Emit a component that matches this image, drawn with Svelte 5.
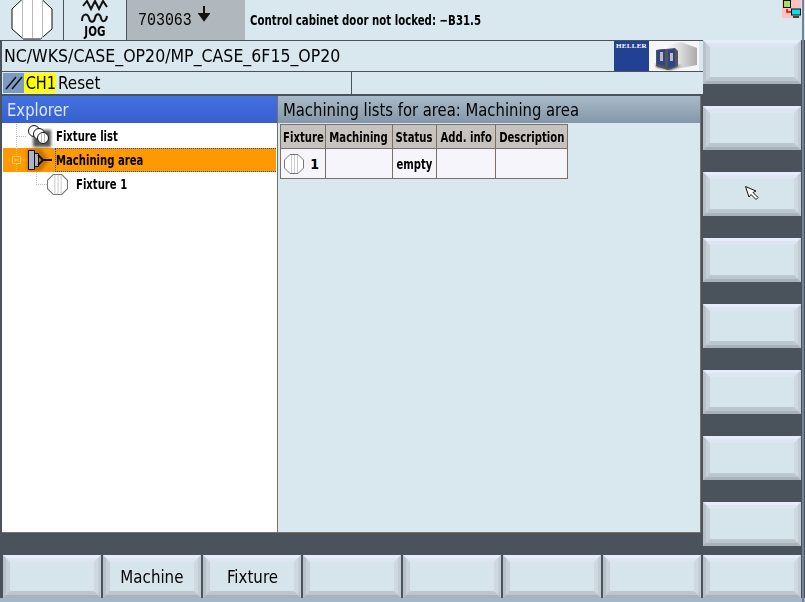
<script>
  /** HMI screen — machining area explorer with softkey bars. */
  const columns = ['Fixture', 'Machining', 'Status', 'Add. info', 'Description']
  const rightKeys = [0, 1, 2, 3, 4, 5, 6, 7]
  const bottomKeys = ['', 'Machine', 'Fixture', '', '', '', '', '']
</script>

{#snippet fixture(w, h)}
  <svg class="fixture" width={w} height={h} viewBox="0 0 20 20">
    <path d="M6 .5h8L19.500 6v8L14 19.500H6L.5 14V6z" fill="#fff" stroke="#777" />
    <path d="M7.500 1v18M10.500 1v18M13.500 1v18" stroke="#ccc" fill="none" />
  </svg>
{/snippet}

<div class="screen">
  <header class="header">
    <div class="cell cell--part">
      <svg width="42" height="40" viewBox="0 0 42 40">
        <path d="M12.500 -2h17L41 9v20L29.500 39h-17L1 29V9z" fill="#fff" stroke="#111" />
        <path d="M11.500 0v38M21.500 0v38M31.500 0v38" stroke="#bbb" fill="none" />
      </svg>
    </div>
    <div class="cell cell--mode">
      <svg width="30" height="24" viewBox="0 0 30 24">
        <path d="M3 6 7 1l4 8 4-8 4 8 4-8 4 6" fill="none" stroke="#111" stroke-width="2" />
        <path d="M2 21c0-8 6-8 7-3s5 5 6 0 5-5 6 0 5 4 6-2" fill="none" stroke="#111" stroke-width="2" />
      </svg>
      <span class="mode-label">JOG</span>
    </div>
    <div class="cell cell--alarm">
      <span class="alarm-number">703063</span>
      <svg class="arrow" width="12" height="16" viewBox="0 0 12 16">
        <path d="M6 0v12M1.500 8 6 14l4.500-6z" fill="#111" stroke="#111" stroke-width="2" />
      </svg>
    </div>
    <div class="message"><span class="narrow narrow--message">Control cabinet door not locked: −B31.5</span></div>
    <div class="net-icon">
      <svg width="19" height="18" viewBox="0 0 19 18">
        <path d="M5 9v3h4" fill="none" stroke="#e00000" stroke-width="1.500" />
        <rect x="1.500" y=".5" width="7" height="7" fill="#a8e060" stroke="#111" />
        <rect x="9.500" y="9" width="9" height="6" fill="#00e0f0" stroke="#111" />
        <path d="M11 17h6" stroke="#111" stroke-width="1.500" />
      </svg>
    </div>
  </header>

  <div class="body">
    <main class="main">
      <div class="path-row">
        <span class="path">NC/WKS/CASE_OP20/MP_CASE_6F15_OP20</span>
        <div class="logo">
          <div class="logo__brand">HELLER</div>
          <svg class="logo__machine" width="50" height="30" viewBox="0 0 50 30">
            <defs>
              <linearGradient id="shade" x1="0" x2="1" y1="0" y2="0">
                <stop offset="0" stop-color="#fff" />
                <stop offset=".5" stop-color="#ddd" />
                <stop offset="1" stop-color="#aaa" />
              </linearGradient>
              <filter id="soft"><feGaussianBlur stdDeviation="1.200" /></filter>
            </defs>
            <rect width="50" height="30" fill="#f6f6f6" />
            <path d="M14 5 32 1l16 6v17l-16 3z" fill="url(#shade)" />
            <path d="M7 26l14 3 12-4-26-2z" fill="#444" filter="url(#soft)" />
            <path d="M7 9l19-2 3 3v15l-10 4-12-4z" fill="#555" />
            <path d="M8 9l8-1v17l-8-2zM19 9l7-1v17l-7 2z" fill="#2a4590" />
            <path d="M11 11h3v9h-3zM21 12h3v8h-3z" fill="#c8b8a8" />
          </svg>
        </div>
      </div>

      <div class="status-row">
        <div class="status-left">
          <span class="reset-icon">
            <svg width="20" height="16" viewBox="0 0 20 16">
              <path d="M2 14 12 2M8 14 18 2" stroke="#111" stroke-width="1.500" fill="none" />
            </svg>
          </span>
          <span class="channel"><span class="channel__text">CH1</span></span>
          <span class="reset">Reset</span>
        </div>
      </div>

      <div class="panes">
        <section class="explorer">
          <h2 class="explorer__title"><span class="title-text">Explorer</span></h2>
          <div class="tree">
            <div class="tree__row">
              <svg class="tree__lines" width="24" height="24" viewBox="0 0 24 24">
                <path d="M13.500 0v24M14 12.500h10" stroke="#bbb" stroke-dasharray="1 1" fill="none" />
              </svg>
              <svg class="tree__icon" width="26" height="24" viewBox="0 0 26 24">
                <defs>
                  <filter id="drop"><feGaussianBlur stdDeviation="1.500" /></filter>
                </defs>
                <rect x="6" y="6" width="18" height="17" fill="#555" filter="url(#drop)" />
                <g fill="#fff" stroke="#111">
                  <circle cx="7" cy="7" r="5.500" />
                  <circle cx="12" cy="10" r="5.500" />
                  <circle cx="16" cy="14" r="5.500" />
                </g>
                <path d="M14.500 9v10M17.500 9v10" stroke="#bbb" fill="none" />
              </svg>
              <span class="tree__label"><span class="narrow">Fixture list</span></span>
            </div>
            <div class="tree__row tree__row--active">
              <svg class="tree__lines" width="24" height="24" viewBox="0 0 24 24">
                <path d="M13.500 0v8M13.500 16v8" stroke="#fc6" stroke-dasharray="1 1" fill="none" />
                <path d="M9.500 8.500h8v7h-8zM11 12h5" stroke="#fc6" fill="none" />
                <path d="M18 12h6" stroke="#fc6" stroke-dasharray="1 1" />
              </svg>
              <svg class="tree__icon" width="26" height="24" viewBox="0 0 26 24">
                <path d="M0 1h14l6 8v6l-6 8H0z" fill="#a05a00" opacity=".6" filter="url(#drop)" />
                <path d="M1.500 2.500h6v19h-6zM7.500 5.500h4v13h-4z" fill="#a9b5c8" stroke="#111" />
                <path d="M11 7l5 5-5 5M15 12h10" fill="none" stroke="#111" stroke-width="2" />
              </svg>
              <span class="tree__label tree__label--focus"><span class="narrow">Machining area</span></span>
            </div>
            <div class="tree__row tree__row--child">
              <svg class="tree__lines" width="44" height="24" viewBox="0 0 44 24">
                <path d="M33.500 0v12.500H44" stroke="#bbb" stroke-dasharray="1 1" fill="none" />
              </svg>
              {@render fixture(21, 21)}
              <span class="tree__label"><span class="narrow">Fixture 1</span></span>
            </div>
          </div>
        </section>

        <section class="lists">
          <h2 class="lists__title"><span class="title-text">Machining lists for area: Machining area</span></h2>
          <table class="table">
            <thead>
              <tr>
                {#each columns as col}
                  <th><div class="table__center"><span class="narrow narrow--center">{col}</span></div></th>
                {/each}
              </tr>
            </thead>
            <tbody>
              <tr>
                <td class="table__fixture">
                  <span class="table__fixture-inner">{@render fixture(20, 20)}<b>1</b></span>
                </td>
                <td></td>
                <td><div class="table__center"><span class="narrow narrow--center">empty</span></div></td>
                <td></td>
                <td></td>
              </tr>
            </tbody>
          </table>
        </section>
      </div>
    </main>

    <aside class="side-keys">
      {#each rightKeys as key}
        <div class="key key--side">
          {#if key === 2}
            <svg width="16" height="18" viewBox="0 0 16 18">
              <path d="M1.500 1.500v0L12 6l-3 1.500 5 5-2 2-5-5L5 12z" fill="#fff" stroke="#111" />
            </svg>
          {/if}
        </div>
      {/each}
    </aside>
  </div>

  <footer class="bottom-keys">
    {#each bottomKeys as label}
      <div class="key key--bottom"><span class="key__label">{label}</span></div>
    {/each}
  </footer>
</div>

<style>
  :global(body) {
    margin: 0;
    background: #4a535c;
  }

  .screen {
    position: relative;
    width: 805px;
    height: 602px;
    display: flex;
    flex-direction: column;
    overflow: hidden;
    background: #4a535c;
    color: #000;
    font-family: "DejaVu Sans Condensed", "DejaVu Sans", sans-serif;
  }

  /* window edge on the right */
  .screen::after {
    content: "";
    position: absolute;
    top: 0;
    bottom: 0;
    right: 1px;
    width: 2px;
    background: #71829a;
  }

  /* the panel font is tall and narrow, nothing installed comes close */
  .narrow {
    display: inline-block;
    font-size: 14px;
    font-weight: 700;
    white-space: nowrap;
    transform: scaleX(.8);
    transform-origin: left center;
  }

  .narrow--center {
    flex: none;
    transform-origin: center;
  }

  .narrow--message {
    transform: scaleX(.81);
  }

  /* top bar */
  .header {
    height: 41px;
    flex: none;
    display: flex;
    background: #d9e7ee;
    box-sizing: border-box;
    border-bottom: 1px solid #4a535c;
  }

  .cell {
    flex: none;
    box-sizing: border-box;
    height: 40px;
    border-right: 1px solid #4a535c;
  }

  .cell--part {
    width: 64px;
    padding-left: 11px;
    overflow: hidden;
  }

  .cell--mode {
    width: 63px;
    display: flex;
    flex-direction: column;
    align-items: center;
  }

  .mode-label {
    font-size: 14px;
    font-weight: 700;
    line-height: 14px;
    transform: scaleX(.82);
  }

  .cell--alarm {
    width: 118px;
    background: #b1b8bd;
    border-right: 0;
    display: flex;
    align-items: flex-start;
    padding: 9px 0 0 11px;
  }

  .alarm-number {
    font-family: "Liberation Mono", monospace;
    font-size: 18px;
    line-height: 22px;
    width: 54px;
    white-space: nowrap;
    transform: scaleX(.83);
    transform-origin: left center;
  }

  .arrow {
    margin: -3px 0 0 6px;
  }

  .message {
    flex: 1;
    padding: 11px 0 0 5px;
    line-height: 17px;
  }

  .net-icon {
    width: 19px;
    height: 18px;
    margin-right: 4px;
    background: #ffc0c0;
  }

  .body {
    flex: none;
    height: 514px;
    display: flex;
  }

  .main {
    width: 701px;
    height: 492px;
    margin-left: 2px;
    display: flex;
    flex-direction: column;
    background: #4a535c;
  }

  .path-row {
    height: 31px;
    flex: none;
    display: flex;
    justify-content: space-between;
    background: #d9e7ee;
    box-sizing: border-box;
    border-bottom: 1px solid #4a535c;
    padding-right: 4px;
  }

  .path {
    font-size: 18px;
    line-height: 29px;
    padding-left: 2px;
    white-space: nowrap;
    transform: scaleX(.975);
    transform-origin: left center;
  }

  .logo {
    display: flex;
    height: 30px;
  }

  .logo__brand {
    width: 35px;
    background: #234192;
    color: #fff;
    font-family: "Liberation Serif", serif;
    font-size: 7px;
    font-weight: 700;
    line-height: 8px;
    padding-top: 1px;
    text-align: center;
    letter-spacing: .3px;
  }

  .status-row {
    height: 23px;
    flex: none;
    display: flex;
    background: #d9e7ee;
    box-sizing: border-box;
    border-bottom: 1px solid #4a535c;
  }

  .status-left {
    width: 349px;
    display: flex;
    align-items: center;
    border-right: 1px solid #4a535c;
  }

  .reset-icon {
    width: 21px;
    height: 20px;
    margin-left: 1px;
    background: #7d9ac0;
    display: flex;
    align-items: center;
    justify-content: center;
  }

  .channel {
    width: 32px;
    height: 20px;
    background: #ffff00;
    font-size: 18px;
    line-height: 20px;
    text-align: center;
  }

  .channel__text {
    display: inline-block;
    transform: scaleX(.9);
  }

  .reset {
    font-size: 18px;
    line-height: 20px;
    margin-left: 2px;
    transform: scaleX(.94);
    transform-origin: left center;
  }

  .panes {
    flex: 1;
    min-height: 0;
    display: flex;
    gap: 1px;
    margin: 1px 2px 0 0;
    background: #7b6f66;
    border-bottom: 1px solid #7b6f66;
    border-right: 1px solid #7b6f66;
  }

  .explorer {
    width: 275px;
    flex: none;
    display: flex;
    flex-direction: column;
    background: #fff;
  }

  .explorer__title,
  .lists__title {
    margin: 0;
    height: 27px;
    flex: none;
    font-weight: 400;
    font-size: 18px;
    line-height: 28px;
    padding-left: 5px;
    box-sizing: border-box;
    white-space: nowrap;
  }

  .title-text {
    display: inline-block;
    transform: scaleX(.915);
    transform-origin: left center;
  }

  .explorer__title {
    background: linear-gradient(#4471e0, #3560d0);
    color: #dde8ff;
  }

  .tree {
    flex: 1;
    padding: 1px 1px 0 1px;
    background: #fff;
  }

  .tree__row {
    height: 24px;
    display: flex;
    align-items: center;
  }

  .tree__row--active {
    background: #ff9900;
  }

  .tree__lines {
    flex: none;
  }

  .tree__icon {
    flex: none;
    overflow: visible;
  }

  .tree__label {
    margin-left: 3px;
    line-height: 22px;
    flex: 1;
  }

  .tree__label--focus {
    border: 1px dotted #1c4fb0;
    border-right: 0;
    margin-left: 2px;
  }

  .tree__row--child .tree__label {
    margin-left: 8px;
  }

  .lists {
    flex: 1;
    display: flex;
    flex-direction: column;
    background: #d9e7ee;
  }

  .lists__title {
    background: linear-gradient(#a9bbca, #8397a8);
  }

  .table {
    border-collapse: collapse;
    margin: 1px 0 0 2px;
    table-layout: fixed;
    width: 287px;
  }

  .table th {
    height: 24px;
    padding: 0;
    background: #c6c2bd;
    border: 1px solid #7b6f66;
    box-sizing: border-box;
  }

  .table th:nth-child(1) { width: 45px; }
  .table th:nth-child(2) { width: 67px; }
  .table th:nth-child(3) { width: 44px; }
  .table th:nth-child(4) { width: 59px; }
  .table th:nth-child(5) { width: 72px; }

  .table td {
    height: 30px;
    padding: 0;
    background: #f5f5fb;
    border: 1px solid #7b6f66;
    box-sizing: border-box;
  }

  .table__center {
    display: flex;
    justify-content: center;
  }

  .table__fixture-inner {
    display: flex;
    align-items: center;
    justify-content: space-between;
    padding: 0 6px 0 3px;
    font-size: 14px;
  }

  /* softkeys */
  .side-keys {
    width: 98px;
    margin-top: -1px;
    display: flex;
    flex-direction: column;
    gap: 22px;
  }

  .bottom-keys {
    flex: none;
    height: 43px;
    display: flex;
    gap: 2px;
    padding-left: 3px;
    border-bottom: 4px solid #a5b6c6;
  }

  .key {
    position: relative;
    flex: none;
    box-sizing: border-box;
    height: 44px;
    width: 98px;
    display: flex;
    align-items: center;
    justify-content: center;
    background: #d6e5ec;
    border-style: solid;
    border-width: 3px;
    border-color: #e6ecfb #c2ccd4 #a7b2ba #b7c1c9;
    font-size: 18px;
  }

  .key::before {
    content: "";
    position: absolute;
    inset: 0;
    border-style: solid;
    border-width: 4px;
    border-color: #dde4f2 #ced8de #bcc6cd #c6d0d6;
  }

  .key--bottom {
    height: 43px;
  }

  .key__label {
    flex: none;
    transform: scaleX(.93);
  }
</style>
